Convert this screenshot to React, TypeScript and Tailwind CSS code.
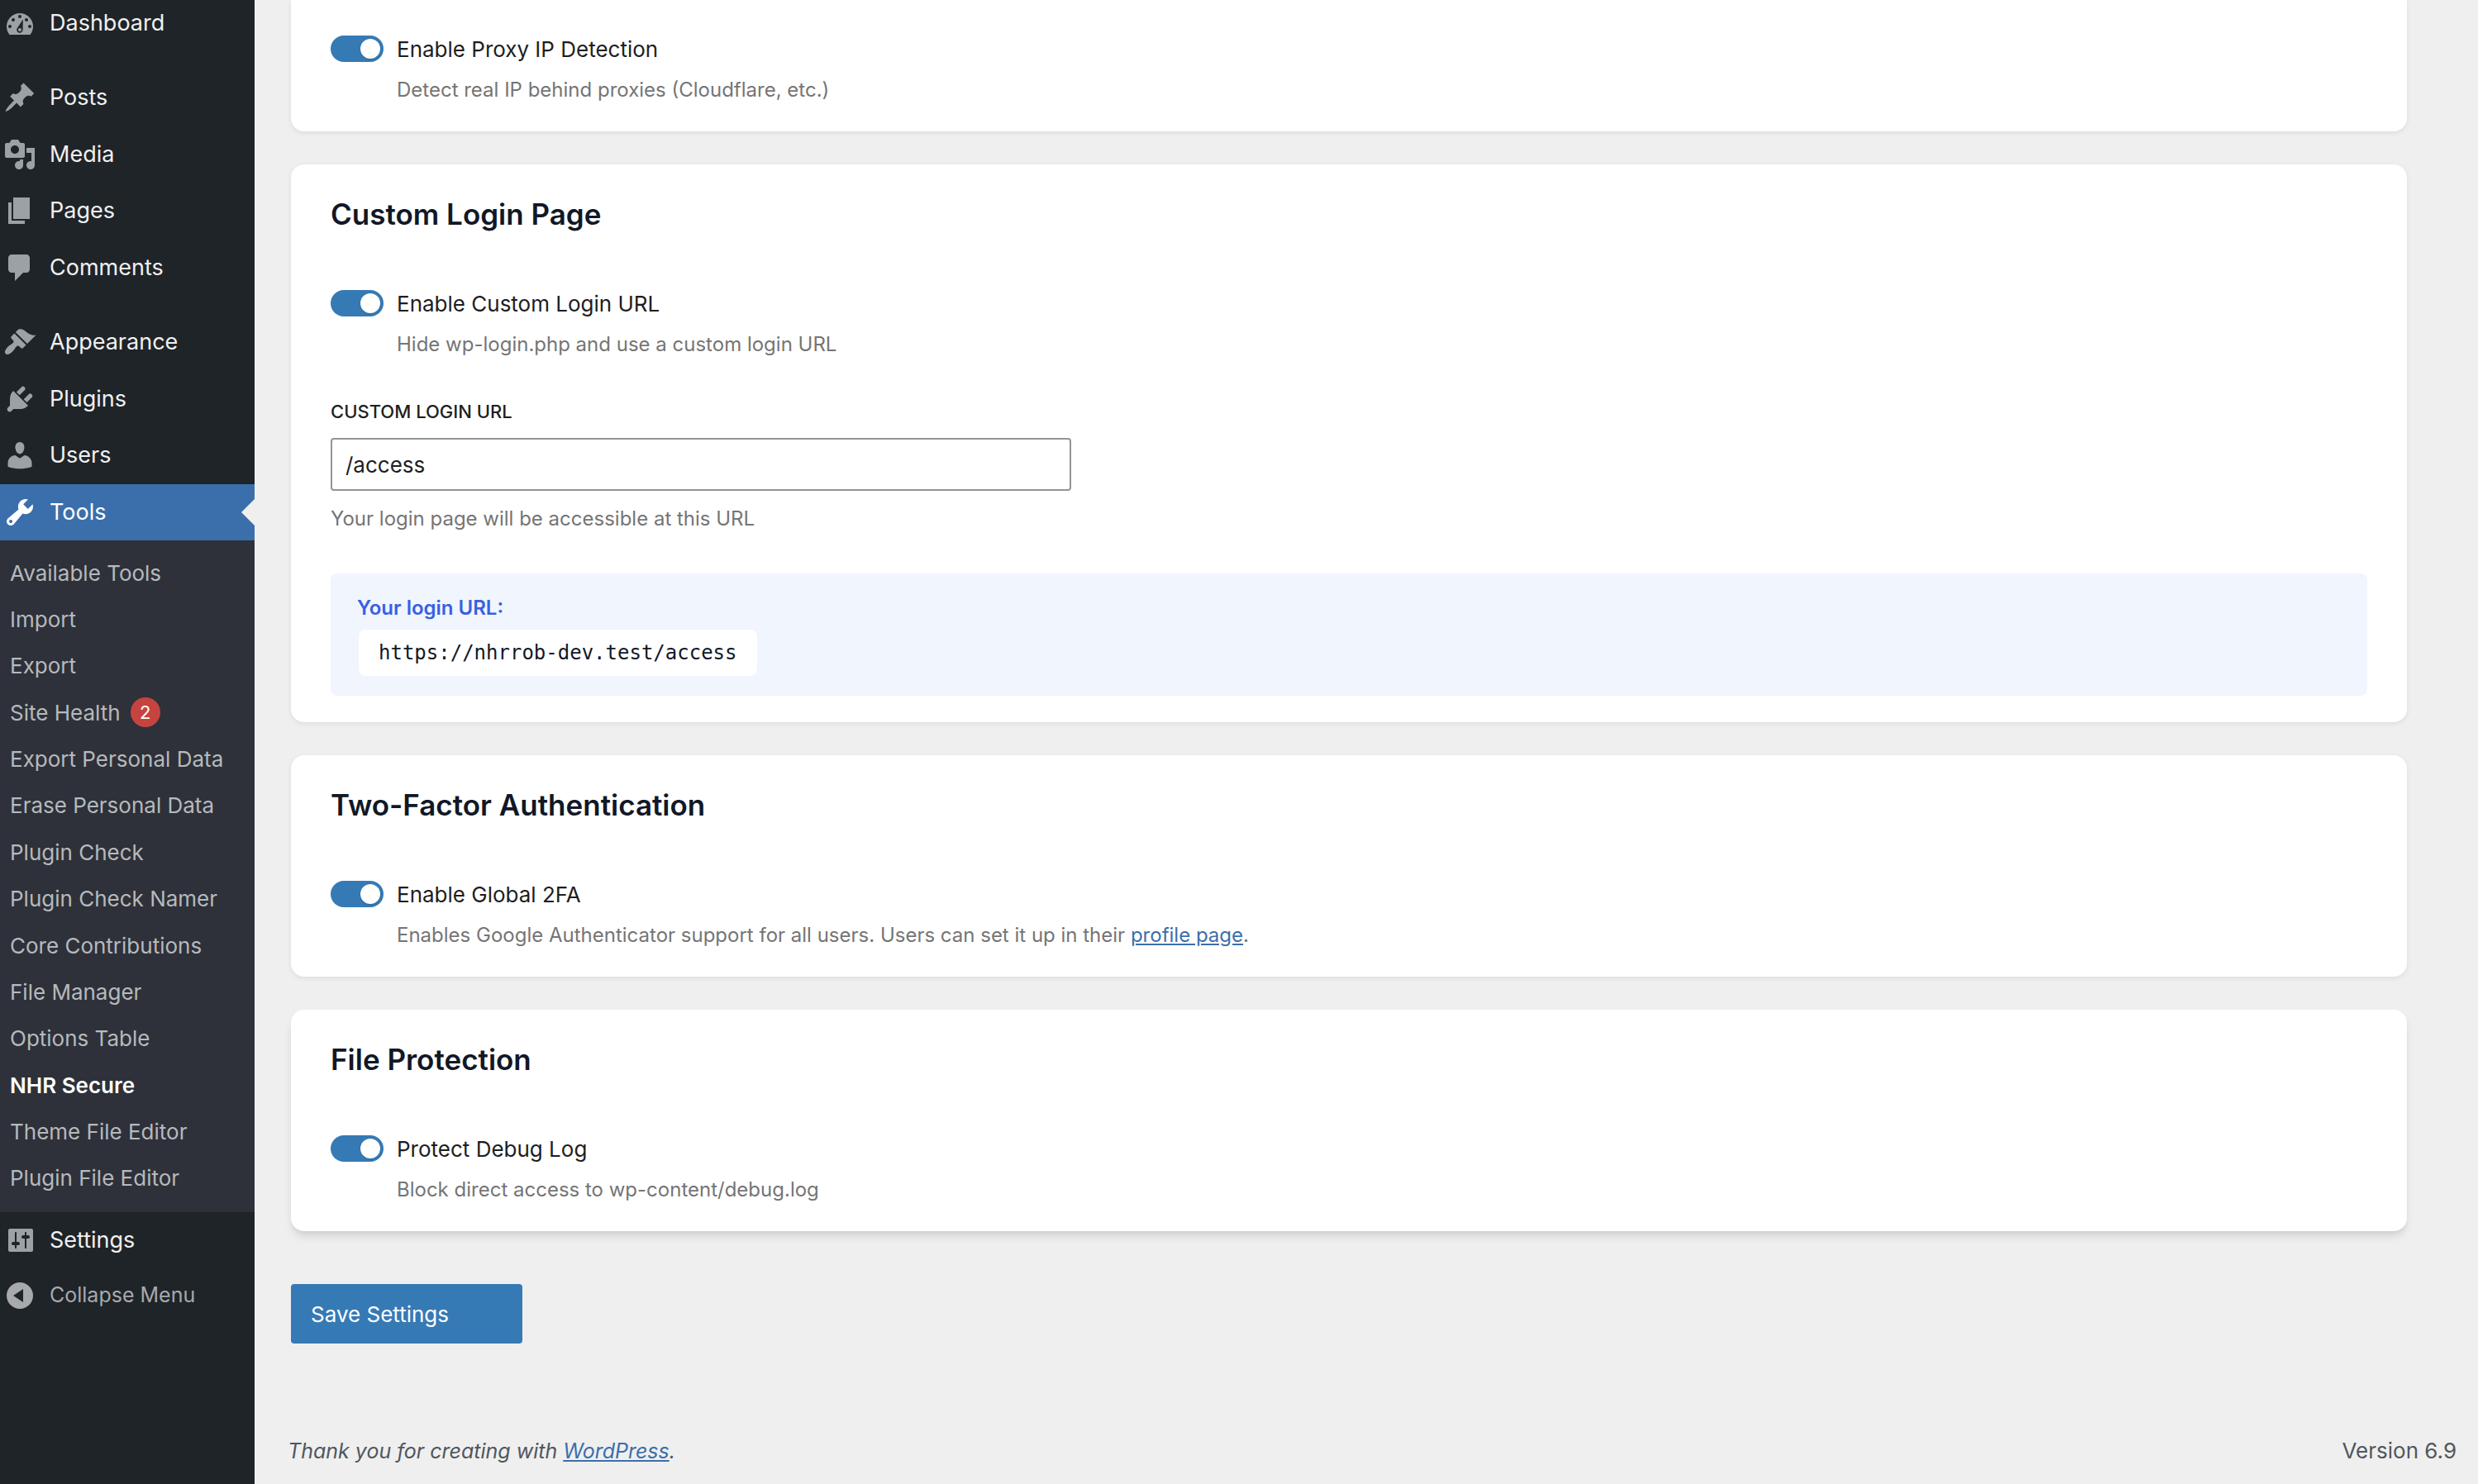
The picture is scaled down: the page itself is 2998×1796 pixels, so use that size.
import { useId, useState } from 'react'
import type { ReactNode } from 'react'
import clsx from 'clsx'

const icons = {
  dashboard:
    'M3.76 17h12.48A7.96 7.96 0 0 0 18 12a8 8 0 1 0-16 0c0 1.89.66 3.63 1.76 5zM10 5a1 1 0 1 1 0 2 1 1 0 0 1 0-2zM6 7a1 1 0 1 1 0 2 1 1 0 0 1 0-2zm8 0a1 1 0 1 1 0 2 1 1 0 0 1 0-2zm-2.1.7-.1 6.3a1.85 1.85 0 1 1-3.6-.6zM4 11a1 1 0 1 1 0 2 1 1 0 0 1 0-2zm12 0a1 1 0 1 1 0 2 1 1 0 0 1 0-2zm-6 2a1 1 0 1 0 0 2 1 1 0 0 0 0-2z',
  posts:
    'M10.44 3.02l1.82-1.82 6.36 6.35-1.83 1.82c-1.05-.68-2.48-.57-3.41.36l-.75.75c-.92.93-1.04 2.35-.35 3.41l-1.83 1.82-2.41-2.41-2.8 2.79c-.42.42-3.38 2.71-3.8 2.29s1.86-3.39 2.28-3.81l2.79-2.79L4.1 9.36l1.83-1.82c1.05.69 2.48.57 3.4-.36l.75-.75c.93-.92 1.05-2.35.36-3.41z',
  media:
    'M13 11V4c0-.55-.45-1-1-1h-1.67L9 1H5L3.67 3H2c-.55 0-1 .45-1 1v7c0 .55.45 1 1 1h10c.55 0 1-.45 1-1zM7 4.5c1.38 0 2.5 1.12 2.5 2.5S8.38 9.5 7 9.5 4.5 8.38 4.5 7 5.62 4.5 7 4.5zM14 6h5v10.5c0 1.38-1.12 2.5-2.5 2.5S14 17.88 14 16.5s1.12-2.5 2.5-2.5c.17 0 .34.02.5.05V9h-3V6zm-4 8.05V13h2v3.5c0 1.38-1.12 2.5-2.5 2.5S7 17.88 7 16.5 8.12 14 9.5 14c.17 0 .34.02.5.05z',
  pages: 'M6 15V2h10v13H6zm-1 1h8v2H3V5h2v11z',
  comments:
    'M5 2h9c1.1 0 2 .9 2 2v7c0 1.1-.9 2-2 2h-2l-5 5v-5H5c-1.1 0-2-.9-2-2V4c0-1.1.9-2 2-2z',
  appearance:
    'M14.48 11.06L7.41 3.99l1.5-1.5c.5-.56 2.3-.47 3.51.32 1.21.8 1.43 1.28 2.91 2.1 1.18.64 2.45 1.26 4.45.85zm-.71.71L6.7 4.7 4.93 6.47c-.39.39-.39 1.02 0 1.41l1.06 1.06c.39.39.39 1.03 0 1.42-.6.6-1.43 1.11-2.21 1.69-.35.26-.7.53-1.01.84C1.43 14.23.4 16.08 1.4 17.07c.99 1 2.84-.03 4.18-1.36.31-.31.58-.66.85-1.02.57-.78 1.08-1.61 1.69-2.21.39-.39 1.02-.39 1.41 0l1.06 1.06c.39.39 1.02.39 1.41 0z',
  plugins:
    'M13.11 4.36L9.87 7.6 8 5.73l3.24-3.24c.35-.34 1.05-.2 1.56.32.52.51.66 1.21.31 1.55zm-8 1.77l.91-1.12 9.01 9.01-1.19.84c-.71.71-2.63 1.16-3.82 1.16H6.14L4.9 17.26c-.59.59-1.54.59-2.12 0-.59-.58-.59-1.53 0-2.12l1.24-1.24v-3.88c0-1.13.4-3.19 1.09-3.89zm7.26 3.97l3.24-3.24c.34-.35 1.04-.21 1.55.31.52.51.66 1.21.31 1.55l-3.24 3.25z',
  users:
    'M10 9.25c-2.27 0-2.73-3.44-2.73-3.44C7 4.02 7.82 2 9.97 2c2.16 0 2.98 2.02 2.71 3.81 0 0-.41 3.44-2.68 3.44zm0 2.57L12.72 10c2.39 0 4.52 2.33 4.52 4.53v2.49s-3.65 1.13-7.24 1.13c-3.65 0-7.24-1.13-7.24-1.13v-2.49c0-2.25 1.94-4.48 4.47-4.48z',
  tools:
    'M16.68 9.77c-1.34 1.34-3.3 1.67-4.95.99l-5.41 6.52c-.99.99-2.59.99-3.58 0s-.99-2.59 0-3.57l6.52-5.42c-.68-1.65-.35-3.61.99-4.95 1.28-1.28 3.12-1.62 4.72-1.06l-2.89 2.89 2.82 2.82 2.86-2.87c.53 1.58.18 3.39-1.08 4.65zM3.81 16.21c.4.39 1.04.39 1.43 0 .4-.4.4-1.04 0-1.43-.39-.4-1.03-.4-1.43 0-.39.39-.39 1.03 0 1.43z',
  settings:
    'M18 16V4c0-.55-.45-1-1-1H4c-.55 0-1 .45-1 1v12c0 .55.45 1 1 1h13c.55 0 1-.45 1-1zM8 11h1c.55 0 1 .45 1 1s-.45 1-1 1H8v1.5c0 .28-.22.5-.5.5s-.5-.22-.5-.5V13H6c-.55 0-1-.45-1-1s.45-1 1-1h1V5.5c0-.28.22-.5.5-.5s.5.22.5.5V11zm5-2h-1c-.55 0-1-.45-1-1s.45-1 1-1h1V5.5c0-.28.22-.5.5-.5s.5.22.5.5V7h1c.55 0 1 .45 1 1s-.45 1-1 1h-1v5.5c0 .28-.22.5-.5.5s-.5-.22-.5-.5V9z',
  collapse:
    'M10 2a8 8 0 1 1 0 16 8 8 0 0 1 0-16zm2 4-6 4 6 4z',
}

type IconName = keyof typeof icons

const contentMenu: { label: string; icon: IconName }[] = [
  { label: 'Posts', icon: 'posts' },
  { label: 'Media', icon: 'media' },
  { label: 'Pages', icon: 'pages' },
  { label: 'Comments', icon: 'comments' },
]

const adminMenu: { label: string; icon: IconName }[] = [
  { label: 'Appearance', icon: 'appearance' },
  { label: 'Plugins', icon: 'plugins' },
  { label: 'Users', icon: 'users' },
  { label: 'Tools', icon: 'tools' },
]

const toolsMenu: { label: string; count?: number }[] = [
  { label: 'Available Tools' },
  { label: 'Import' },
  { label: 'Export' },
  { label: 'Site Health', count: 2 },
  { label: 'Export Personal Data' },
  { label: 'Erase Personal Data' },
  { label: 'Plugin Check' },
  { label: 'Plugin Check Namer' },
  { label: 'Core Contributions' },
  { label: 'File Manager' },
  { label: 'Options Table' },
  { label: 'NHR Secure' },
  { label: 'Theme File Editor' },
  { label: 'Plugin File Editor' },
]

function Dashicon({ name }: { name: IconName }) {
  return (
    <svg
      viewBox="0 0 20 20"
      className="h-10 w-10 shrink-0"
      fill="currentColor"
      fillRule="evenodd"
      aria-hidden="true"
    >
      <path d={icons[name]} />
    </svg>
  )
}

function MenuItem({
  label,
  icon,
  active,
}: {
  label: string
  icon: IconName
  active?: boolean
}) {
  return (
    <a
      href="#"
      className={clsx(
        'relative flex min-h-[68px] items-center gap-4 pl-1 text-[27px]',
        active ? 'bg-[#3b6fab] text-white' : 'text-[#f0f0f1]',
      )}
    >
      <span className={active ? 'text-white' : 'text-[#9ca1a7]'}>
        <Dashicon name={icon} />
      </span>
      {label}
      {active && (
        <svg
          viewBox="0 0 16 32"
          className="absolute top-[18px] right-0 h-8 w-4 text-[#efefef]"
          fill="currentColor"
          aria-hidden="true"
        >
          <path d="M16 0v32L0 16z" />
        </svg>
      )}
    </a>
  )
}

function Sidebar() {
  return (
    <aside className="w-[308px] shrink-0 overflow-hidden bg-[#1f2428]">
      <nav className="-mt-1.5">
        <MenuItem label="Dashboard" icon="dashboard" />
        <div className="mt-[22px] grid h-[274px] auto-rows-fr">
          {contentMenu.map((item) => (
            <MenuItem key={item.label} {...item} />
          ))}
        </div>
        <div className="mt-[22px] grid h-[274px] auto-rows-fr">
          {adminMenu.map((item) => (
            <MenuItem
              key={item.label}
              {...item}
              active={item.label === 'Tools'}
            />
          ))}
        </div>
        <ul className="flex h-[813px] flex-col justify-between bg-[#2e3139] pt-[11px] pb-[13px]">
          {toolsMenu.map(({ label, count }) => (
            <li key={label}>
              <a
                href="#"
                className={clsx(
                  'flex h-14 items-center gap-3 pl-3 text-[26px]',
                  label === 'NHR Secure'
                    ? 'font-semibold text-white'
                    : 'text-[#b6b9bd]',
                )}
              >
                {label}
                {count && (
                  <span className="flex h-9 w-9 items-center justify-center rounded-full bg-[#c6443f] text-[22px] text-white">
                    {count}
                  </span>
                )}
              </a>
            </li>
          ))}
        </ul>
        <MenuItem label="Settings" icon="settings" />
        <button
          type="button"
          className="flex h-[66px] w-full items-center gap-4 pl-1 text-[25px] text-[#a7a9ad]"
        >
          <Dashicon name="collapse" />
          Collapse Menu
        </button>
      </nav>
    </aside>
  )
}

function Card({
  title,
  raised,
  children,
}: {
  title: string
  raised?: boolean
  children: ReactNode
}) {
  return (
    <section
      className={clsx(
        'rounded-2xl bg-white px-12 py-8',
        raised
          ? 'shadow-[0_8px_12px_-2px_rgba(0,0,0,0.1),0_4px_8px_-4px_rgba(0,0,0,0.1)]'
          : 'shadow-[0_2px_6px_rgba(0,0,0,0.08)]',
      )}
    >
      <h2 className="mb-16 text-[35px] leading-14 font-semibold text-[#111827]">
        {title}
      </h2>
      {children}
    </section>
  )
}

function Toggle({ label, children }: { label: string; children: ReactNode }) {
  const id = useId()
  const [checked, setChecked] = useState(true)

  return (
    <div>
      <div className="flex h-8 items-center gap-4">
        <input
          id={id}
          type="checkbox"
          role="switch"
          checked={checked}
          onChange={(e) => setChecked(e.target.checked)}
          className="flex h-8 w-16 appearance-none items-center rounded-full bg-[#949494] px-1 before:h-6 before:w-6 before:rounded-full before:bg-white before:shadow-sm checked:justify-end checked:bg-[#367ab5]"
        />
        <label htmlFor={id} className="text-[26px] text-[#1e1e1e]">
          {label}
        </label>
      </div>
      <p className="mt-4 pl-20 text-[24px] leading-9 text-[#757575]">
        {children}
      </p>
    </div>
  )
}

export default function App() {
  const [slug, setSlug] = useState('/access')

  return (
    <div className="flex min-h-screen bg-[#efefef] font-[Inter,sans-serif]">
      <Sidebar />
      <div className="flex min-w-0 flex-1 flex-col">
        <main className="ml-11 flex max-w-[2560px] flex-col gap-10">
          <section className="rounded-b-2xl bg-white px-12 pt-[43px] pb-8 shadow-[0_2px_6px_rgba(0,0,0,0.08)]">
            <Toggle label="Enable Proxy IP Detection">
              Detect real IP behind proxies (Cloudflare, etc.)
            </Toggle>
          </section>

          <Card title="Custom Login Page">
            <Toggle label="Enable Custom Login URL">
              Hide wp-login.php and use a custom login URL
            </Toggle>
            <label
              htmlFor="login-url"
              className="mt-12 block text-[22px] leading-[31px] font-medium text-[#1e1e1e] uppercase"
            >
              Custom Login URL
            </label>
            <input
              id="login-url"
              type="text"
              value={slug}
              onChange={(e) => setSlug(e.target.value)}
              className="mt-4 block h-16 w-full max-w-[896px] rounded border-2 border-[#949494] bg-white px-4 text-[26px] text-[#1e1e1e]"
            />
            <p className="mt-4 text-[24px] leading-9 text-[#757575]">
              Your login page will be accessible at this URL
            </p>
            <div className="mt-12 rounded-lg bg-[#f0f5fe] px-8 py-6">
              <p className="text-[24px] leading-9 font-semibold text-[#3860e2]">
                Your login URL:
              </p>
              <code className="mt-2 ml-0.5 flex h-14 w-fit items-center rounded-lg bg-white px-6 font-['DejaVu_Sans_Mono',monospace] text-[24px] text-[#111827]">
                https://nhrrob-dev.test{slug}
              </code>
            </div>
          </Card>

          <Card title="Two-Factor Authentication">
            <Toggle label="Enable Global 2FA">
              Enables Google Authenticator support for all users. Users can set
              it up in their{' '}
              <a href="#" className="text-[#3b6fab] underline">
                profile page
              </a>
              .
            </Toggle>
          </Card>

          <Card title="File Protection" raised>
            <Toggle label="Protect Debug Log">
              Block direct access to wp-content/debug.log
            </Toggle>
          </Card>
        </main>

        <button
          type="button"
          className="mt-16 ml-11 h-[72px] w-[280px] rounded bg-[#367ab5] px-6 text-left text-[26px] text-white"
        >
          Save Settings
        </button>

        <footer className="mt-auto flex justify-between pt-16 pr-[26px] pb-5 pl-10 text-[26px] leading-10 text-[#50575e]">
          <p className="text-[25px] italic">
            Thank you for creating with{' '}
            <a href="#" className="text-[#3b6fab] underline">
              WordPress
            </a>
            .
          </p>
          <p>Version 6.9</p>
        </footer>
      </div>
    </div>
  )
}
